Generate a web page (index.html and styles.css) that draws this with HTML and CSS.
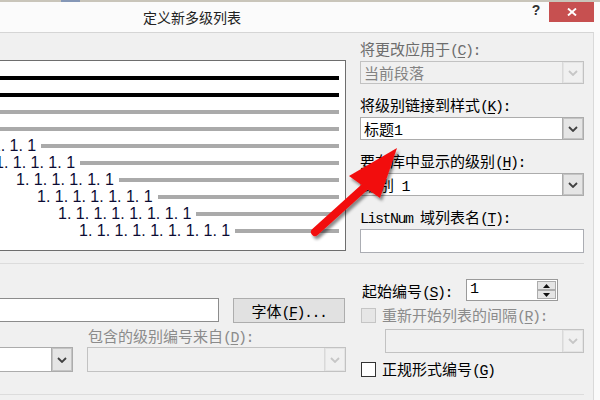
FILE: index.html
```html
<!DOCTYPE html>
<html lang="zh-CN">
<head>
<meta charset="utf-8">
<title>定义新多级列表</title>
<link rel="stylesheet" href="styles.css">
</head>
<body>
<div class="strip"><span class="strip-blue"></span></div>
<div class="titlebar">
  <div class="title">定义新多级列表</div>
  <div class="help">?</div>
  <div class="close"><svg width="10" height="8" viewBox="0 0 10 8"><path d="M1 0.5 L9 7.5 M9 0.5 L1 7.5" stroke="#fff" stroke-width="1.9"/></svg></div>
</div>
<div class="client">
  <div class="upper">
    <div class="pcol">
      <div class="preview">
        <div class="row"><i class="ln k"></i></div>
        <div class="row"><i class="ln k"></i></div>
        <div class="row"><i class="ln"></i></div>
        <div class="row"><i class="ln"></i></div>
        <div class="row i5"><span class="num">1. 1. 1. 1</span><i class="ln gap"></i></div>
        <div class="row i6"><span class="num">1. 1. 1. 1. 1</span><i class="ln gap"></i></div>
        <div class="row i7"><span class="num">1. 1. 1. 1. 1. 1</span><i class="ln gap"></i></div>
        <div class="row i8"><span class="num">1. 1. 1. 1. 1. 1. 1</span><i class="ln gap"></i></div>
        <div class="row i9"><span class="num">1. 1. 1. 1. 1. 1. 1. 1</span><i class="ln gap"></i></div>
        <div class="row i10"><span class="num">1. 1. 1. 1. 1. 1. 1. 1. 1</span><i class="ln gap"></i></div>
      </div>
    </div>
    <div class="side">
      <div class="lbl first dis">将更改应用于<span class="a">(<u>C</u>):</span></div>
      <div class="combo off"><span class="val">当前段落</span><span class="btn"><svg width="10" height="6" viewBox="0 0 10 6"><polyline points="1,1 5,5 9,1" fill="none" stroke="#c6c6c6" stroke-width="1.8"/></svg></span></div>
      <div class="lbl">将级别链接到样式<span class="a">(<u>K</u>):</span></div>
      <div class="combo"><span class="val">标题<span class="a">1</span></span><span class="btn"><svg width="10" height="6" viewBox="0 0 10 6"><polyline points="1,1 5,5 9,1" fill="none" stroke="#404040" stroke-width="1.8"/></svg></span></div>
      <div class="lbl">要在库中显示的级别<span class="a">(<u>H</u>):</span></div>
      <div class="combo"><span class="val">级别<span class="a"> 1</span></span><span class="btn"><svg width="10" height="6" viewBox="0 0 10 6"><polyline points="1,1 5,5 9,1" fill="none" stroke="#404040" stroke-width="1.8"/></svg></span></div>
      <div class="lbl"><span class="a">ListNum </span>域列表名<span class="a">(<u>T</u>):</span></div>
      <div class="input"></div>
    </div>
  </div>
  <div class="sep"></div>
  <div class="lower">
    <div class="lleft">
      <div class="rowA">
        <div class="tinput"></div>
        <div class="button">字体<span class="a">(<u>F</u>)...</span></div>
      </div>
      <div class="sublbl dis2">包含的级别编号来自<span class="a">(<u>D</u>):</span></div>
      <div class="rowC">
        <div class="combo small"><span class="val"></span><span class="btn"><svg width="10" height="6" viewBox="0 0 10 6"><polyline points="1,1 5,5 9,1" fill="none" stroke="#404040" stroke-width="1.8"/></svg></span></div>
        <div class="combo off wide"><span class="val"></span><span class="btn"><svg width="10" height="6" viewBox="0 0 10 6"><polyline points="1,1 5,5 9,1" fill="none" stroke="#c6c6c6" stroke-width="1.8"/></svg></span></div>
      </div>
    </div>
    <div class="lright">
      <div class="spinrow">
        <span class="spinlbl">起始编号<span class="a">(<u>S</u>):</span></span>
        <div class="spin">
          <span class="v a">1</span>
          <span class="sbtns">
            <span class="sb"><svg width="7" height="4" viewBox="0 0 7 4"><polygon points="0,4 3.5,0 7,4" fill="#111"/></svg></span>
            <span class="sb"><svg width="7" height="4" viewBox="0 0 7 4"><polygon points="0,0 3.5,4 7,0" fill="#111"/></svg></span>
          </span>
        </div>
      </div>
      <div class="chkrow r2"><span class="chk off"></span><span class="dis2">重新开始列表的间隔<span class="a">(<u>R</u>):</span></span></div>
      <div class="combo off restart"><span class="val"></span><span class="btn"><svg width="10" height="6" viewBox="0 0 10 6"><polyline points="1,1 5,5 9,1" fill="none" stroke="#c6c6c6" stroke-width="1.8"/></svg></span></div>
      <div class="chkrow r4"><span class="chk"></span><span>正规形式编号<span class="a">(<u>G</u>)</span></span></div>
    </div>
  </div>
  <div class="sep"></div>
</div>
<svg class="arrow" width="600" height="400" viewBox="0 0 600 400">
  <defs>
    <filter id="sh" x="-30%" y="-30%" width="160%" height="160%">
      <feDropShadow dx="2" dy="3" stdDeviation="1.6" flood-color="#000" flood-opacity="0.45"/>
    </filter>
  </defs>
  <g filter="url(#sh)">
    <line x1="315" y1="232" x2="367" y2="185" stroke="#f20d0d" stroke-width="8" stroke-linecap="round"/>
    <polygon points="349,176 397,148 380,198" fill="#f20d0d"/>
  </g>
</svg>
</body>
</html>
```
FILE: styles.css
```css
html, body {
  margin: 0;
  padding: 0;
}
body {
  width: 600px;
  height: 400px;
  overflow: hidden;
  position: relative;
  background: #fafafa;
  font-family: "Noto Sans CJK SC", sans-serif;
  font-size: 15px;
  color: #000;
}
.a {
  font-family: "Liberation Mono", "Noto Sans CJK SC", monospace;
  letter-spacing: -1.5px;
  line-height: 0;
}
u { text-underline-offset: 2px; }
.strip {
  height: 2px;
  background: #c9c5ba;
  display: flex;
}
.strip-blue {
  margin-left: 61px;
  width: 19px;
  background: #8597b6;
}
.titlebar {
  height: 30px;
  display: flex;
  align-items: flex-start;
  background: #fbfbfb;
}
.title {
  flex: 1;
  padding-left: 143px;
  font-size: 14px;
  line-height: 30px;
  color: #222;
}
.help {
  width: 16px;
  line-height: 20px;
  text-align: center;
  font: bold 14px "Liberation Sans", sans-serif;
  color: #333;
}
.close {
  width: 45px;
  height: 20px;
  margin-left: 5px;
  margin-right: 6px;
  background: #c75050;
  display: flex;
  align-items: center;
  justify-content: center;
}
.client {
  width: 594px;
  height: 368px;
  box-sizing: border-box;
  border-top: 1px solid #d5d5d5;
  border-right: 1px solid #d9d9d9;
  background: #f0f0f0;
}
.upper {
  display: flex;
  height: 230px;
}
.pcol {
  width: 346px;
  padding-top: 27px;
}
.preview {
  margin-left: -121px;
  width: 467px;
  height: 191px;
  box-sizing: border-box;
  border: 1px solid #6e6e6e;
  background: #fff;
  padding: 8px 6px 0 10px;
}
.row {
  display: flex;
  align-items: center;
  height: 17px;
}
.i5 { padding-left: 84px; }
.i6 { padding-left: 105px; }
.i7 { padding-left: 126px; }
.i8 { padding-left: 147px; }
.i9 { padding-left: 168px; }
.i10 { padding-left: 189px; }
.num {
  font-family: "Liberation Sans", sans-serif;
  font-size: 16px;
  line-height: 17px;
  color: #0c0c34;
  white-space: pre;
}
.ln {
  flex: 1;
  height: 4px;
  background: #aaa;
}
.ln.gap { margin-left: 5px; }
.ln.k { background: #000; }
.side {
  width: 224px;
  margin-left: 14px;
  padding-top: 7px;
}
.lbl {
  height: 18px;
  line-height: 18px;
  margin-top: 12px;
  margin-bottom: 3px;
  white-space: nowrap;
}
.lbl.first { margin-top: 0; }
.dis { color: #6d6d6d; }
.dis2 { color: #8b8b8b; }
.combo {
  display: flex;
  height: 23px;
  box-sizing: border-box;
  border: 1px solid #acacac;
  background: #fff;
}
.combo .val {
  flex: 1;
  padding-left: 3px;
  line-height: 21px;
  white-space: nowrap;
  overflow: hidden;
}
.combo .btn {
  width: 20px;
  border-left: 1px solid #acacac;
  background: #e5e5e5;
  box-shadow: inset 0 0 0 1px #c4c4c4;
  display: flex;
  align-items: center;
  justify-content: center;
}
.combo.off {
  border-color: #c2c2c2;
  background: #f0f0f0;
}
.combo.off .val { color: #838383; }
.combo.off .btn {
  border-left-color: #d9d9d9;
  background: #f0f0f0;
  box-shadow: inset 0 0 0 1px #e4e4e4;
}
.input {
  height: 24px;
  box-sizing: border-box;
  border: 1px solid #abadb3;
  background: #fff;
}
.sep {
  width: 584px;
  height: 1px;
  background: #dcdcdc;
}
.lower {
  display: flex;
  height: 130px;
}
.lleft {
  width: 346px;
  padding-top: 34px;
}
.rowA {
  display: flex;
  align-items: flex-start;
}
.tinput {
  margin-left: -2px;
  width: 221px;
  height: 24px;
  box-sizing: border-box;
  border: 1px solid #8c8c8c;
  background: #fff;
}
.button {
  margin-left: 14px;
  width: 112px;
  height: 25px;
  box-sizing: border-box;
  border: 1px solid #adadad;
  background: #e1e1e1;
  text-align: center;
  line-height: 23px;
}
.sublbl {
  height: 18px;
  margin-top: 4px;
  padding-left: 88px;
  line-height: 18px;
  white-space: nowrap;
}
.rowC {
  display: flex;
  margin-top: 2px;
}
.combo.small {
  margin-left: -2px;
  width: 75px;
  height: 25px;
}
.combo.wide {
  margin-left: 14px;
  width: 260px;
  height: 25px;
}
.lright {
  width: 224px;
  margin-left: 14px;
  padding-top: 15px;
}
.spinrow {
  display: flex;
  align-items: center;
  height: 22px;
  padding-left: 2px;
}
.spinlbl {
  width: 104px;
  white-space: nowrap;
}
.spin {
  width: 92px;
  height: 22px;
  box-sizing: border-box;
  border: 1px solid #9a9a9a;
  background: #fff;
  display: flex;
}
.spin .v {
  flex: 1;
  padding-left: 3px;
  line-height: 20px;
}
.sbtns {
  width: 19px;
  padding: 1px 1px 1px 0;
  display: flex;
  flex-direction: column;
}
.sb {
  height: 9px;
  box-sizing: border-box;
  border: 1px solid #acacac;
  background: #e5e5e5;
  display: flex;
  align-items: center;
  justify-content: center;
}
.chkrow {
  display: flex;
  align-items: center;
  height: 18px;
  line-height: 18px;
  padding-left: 1px;
  white-space: nowrap;
}
.chkrow.r2 { margin-top: 5px; }
.chkrow.r4 { margin-top: 7px; }
.chk {
  width: 15px;
  height: 15px;
  box-sizing: border-box;
  border: 1px solid #333;
  background: #fff;
  margin-right: 6px;
}
.chk.off {
  border-color: #c5c5c5;
  background: #e6e6e6;
}
.combo.restart {
  margin-top: 5px;
  margin-left: 25px;
  width: 199px;
  height: 24px;
}
.arrow {
  position: absolute;
  left: 0;
  top: 0;
  pointer-events: none;
}
```
